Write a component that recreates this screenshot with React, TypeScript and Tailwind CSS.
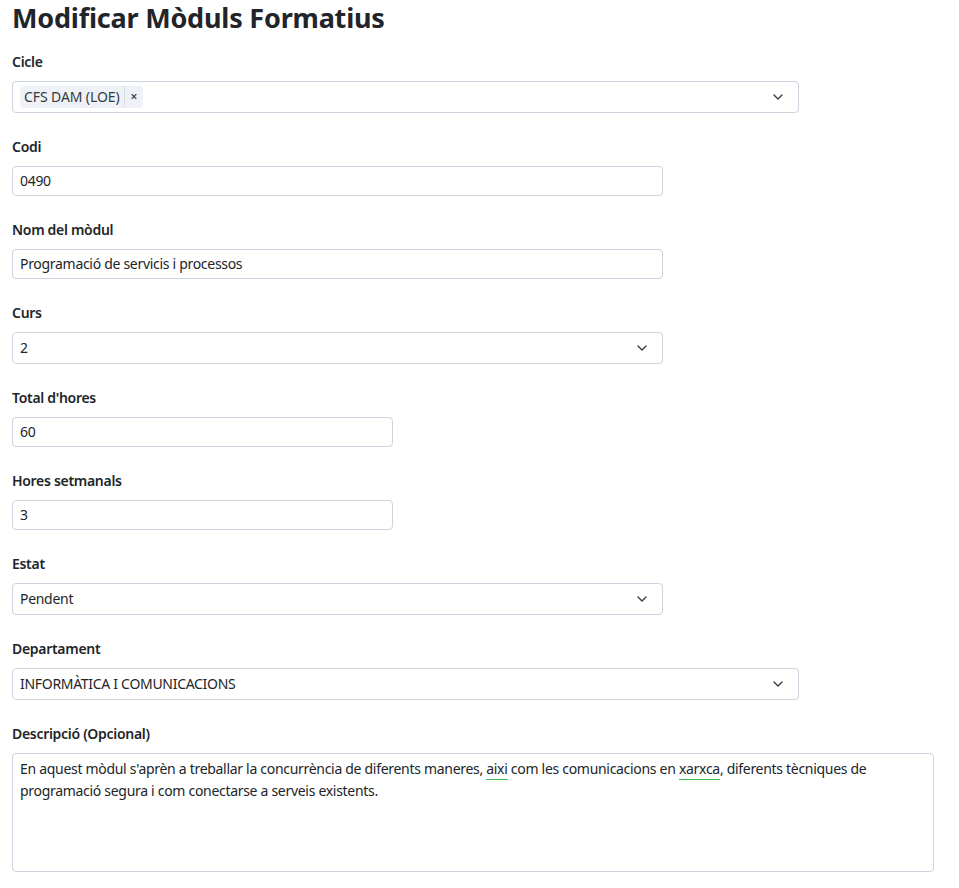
import { ChevronDown } from "lucide-react";

const font = { fontFamily: '"Noto Sans", "Open Sans", sans-serif' };

function Label({ children }: { children: React.ReactNode }) {
  return <label className="mb-[9px] block text-[14px] font-semibold leading-[20px] text-[#212529]">{children}</label>;
}

function Field({ label, value, width }: { label: string; value: string; width: string }) {
  return (
    <div className="mb-[24px]">
      <Label>{label}</Label>
      <div className={`${width} flex h-[30px] items-center rounded-[4px] border border-[#ccd4df] bg-white px-[7px] pb-px text-[14px] text-[#212529]`}>
        {value}
      </div>
    </div>
  );
}

function Select({ label, value, width }: { label: string; value: string; width: string }) {
  return (
    <div className="mb-[24px]">
      <Label>{label}</Label>
      <div className={`${width} flex h-[32px] items-center justify-between rounded-[4px] border border-[#ccd4df] bg-white pl-[7px] pr-[12px] pb-px text-[14px] text-[#212529]`}>
        <span>{value}</span>
        <ChevronDown size={16} strokeWidth={2} className="text-[#343a40]" />
      </div>
    </div>
  );
}

export default function App() {
  return (
    <div className="min-h-[888px] bg-white px-[12px] tracking-[-0.3px]" style={font}>
      <h1 className="mb-[16px] text-[27px] font-bold leading-[36px] tracking-[-0.2px] text-[#212529]">Modificar Mòduls Formatius</h1>

      <div className="mb-[24px]">
        <Label>Cicle</Label>
        <div className="flex h-[32px] w-[787px] items-center justify-between rounded-[4px] border border-[#ccd4df] bg-white pl-[7px] pr-[12px]">
          <span className="flex h-[22px] items-center rounded-[4px] bg-[#eef1f6] pb-px text-[14px] tracking-[-0.1px] text-[#343a40]">
            <span className="px-[4px]">CFS DAM (LOE)</span>
            <span className="flex h-full items-center border-l border-[#d6dbe3] px-[6px] text-[12px] font-semibold">×</span>
          </span>
          <ChevronDown size={16} strokeWidth={2} className="text-[#343a40]" />
        </div>
      </div>

      <Field label="Codi" value="0490" width="w-[651px]" />
      <Field label="Nom del mòdul" value="Programació de servicis i processos" width="w-[651px]" />
      <Select label="Curs" value="2" width="w-[651px]" />
      <Field label="Total d'hores" value="60" width="w-[381px]" />
      <Field label="Hores setmanals" value="3" width="w-[381px]" />
      <Select label="Estat" value="Pendent" width="w-[651px]" />
      <Select label="Departament" value="INFORMÀTICA I COMUNICACIONS" width="w-[787px]" />

      <div>
        <Label>Descripció (Opcional)</Label>
        <div className="h-[119px] w-[922px] rounded-[4px] border border-[#ccd4df] bg-white px-[7px] py-[4px] text-[14px] leading-[22px] text-[#212529]">
          En aquest mòdul s'aprèn a treballar la concurrència de diferents maneres,{" "}
          <span className="border-b border-[#3fbf50] pb-[1px]">aixi</span> com les comunicacions en{" "}
          <span className="border-b border-[#3fbf50] pb-[1px]">xarxca</span>, diferents tècniques de programació segura i com conectarse a serveis existents.
        </div>
      </div>
    </div>
  );
}
